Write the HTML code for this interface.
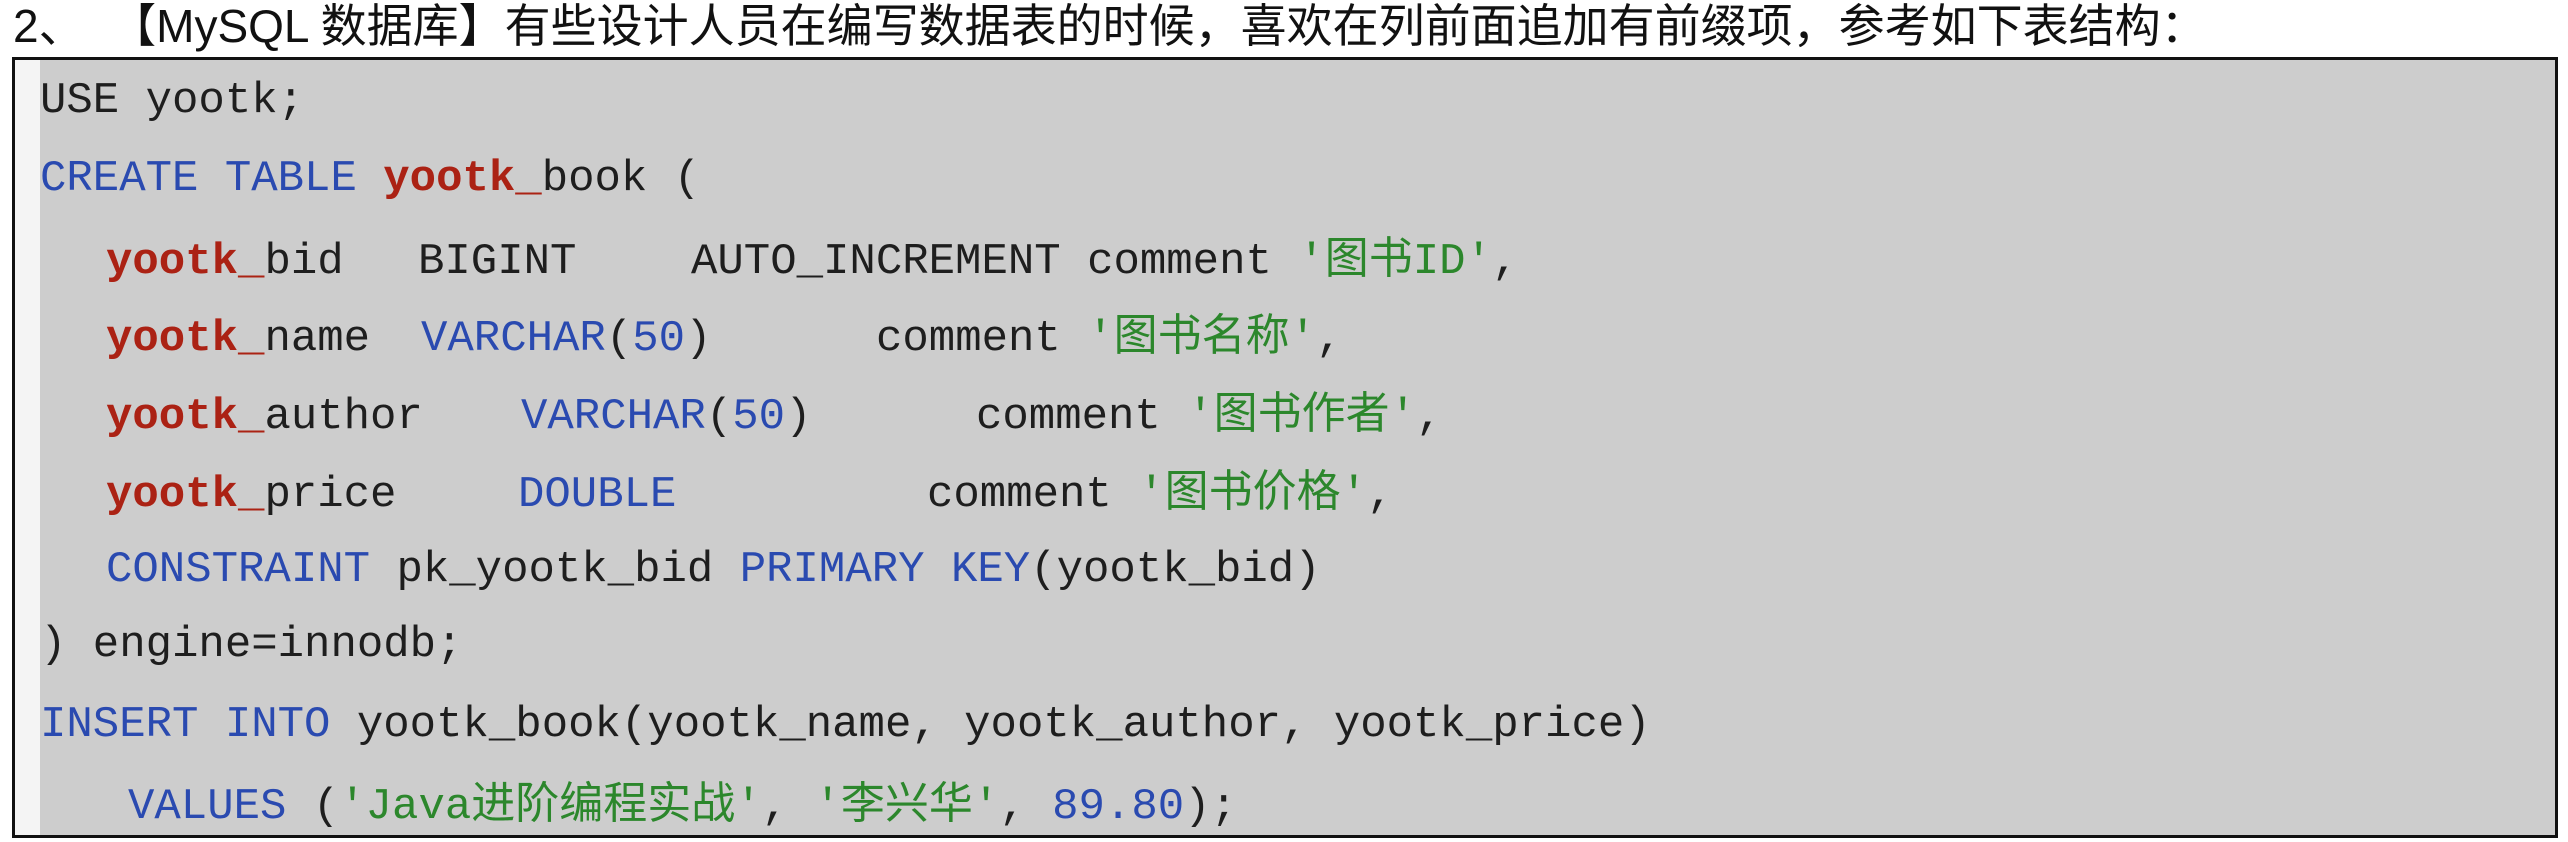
<!DOCTYPE html>
<html><head><meta charset="utf-8"><style>
html,body{margin:0;padding:0;background:#fff;width:2568px;height:842px;overflow:hidden;position:relative}
.t{position:absolute;left:13px;top:0px;font:46px "Liberation Sans","Noto Sans CJK SC",sans-serif;color:#111;white-space:pre;line-height:52px}
.box{position:absolute;left:12px;top:57px;width:2546px;height:781px;border:3px solid #111;background:#cdcdcd;box-sizing:border-box}
.strip{position:absolute;left:15px;top:60px;width:25px;height:775px;background:#f4f4f4}
.l{position:absolute;font:44px "Liberation Mono","Noto Sans CJK SC",monospace;line-height:44px;white-space:pre;color:#1e1e1e}
.b{color:#2a4ab0}.r{color:#ab2214;font-weight:bold}.g{color:#2c872c}
</style></head><body>
<div class="t">2、  【MySQL 数据库】有些设计人员在编写数据表的时候，喜欢在列前面追加有前缀项，参考如下表结构：</div>
<div class="box"></div><div class="strip"></div>

<div class="l" style="left:40px;top:79px">USE yootk;</div>
<div class="l" style="left:40px;top:157px"><span class="b">CREATE TABLE</span> <span class="r">yootk_</span>book (</div>

<div class="l" style="left:106px;top:240px"><span class="r">yootk_</span>bid</div>
<div class="l" style="left:418px;top:240px">BIGINT</div>
<div class="l" style="left:691px;top:240px">AUTO_INCREMENT comment <span class="g">'图书ID'</span>,</div>

<div class="l" style="left:106px;top:317px"><span class="r">yootk_</span>name</div>
<div class="l" style="left:421px;top:317px"><span class="b">VARCHAR</span>(<span class="b">50</span>)</div>
<div class="l" style="left:876px;top:317px">comment <span class="g">'图书名称'</span>,</div>

<div class="l" style="left:106px;top:395px"><span class="r">yootk_</span>author</div>
<div class="l" style="left:521px;top:395px"><span class="b">VARCHAR</span>(<span class="b">50</span>)</div>
<div class="l" style="left:976px;top:395px">comment <span class="g">'图书作者'</span>,</div>

<div class="l" style="left:106px;top:473px"><span class="r">yootk_</span>price</div>
<div class="l" style="left:518px;top:473px"><span class="b">DOUBLE</span></div>
<div class="l" style="left:927px;top:473px">comment <span class="g">'图书价格'</span>,</div>

<div class="l" style="left:106px;top:548px"><span class="b">CONSTRAINT</span> pk_yootk_bid <span class="b">PRIMARY KEY</span>(yootk_bid)</div>
<div class="l" style="left:40px;top:623px">) engine=innodb;</div>
<div class="l" style="left:40px;top:703px"><span class="b">INSERT INTO</span> yootk_book(yootk_name, yootk_author, yootk_price)</div>
<div class="l" style="left:128px;top:785px"><span class="b">VALUES</span> (<span class="g">'Java进阶编程实战'</span>, <span class="g">'李兴华'</span>, <span class="b">89.80</span>);</div>
</body></html>
